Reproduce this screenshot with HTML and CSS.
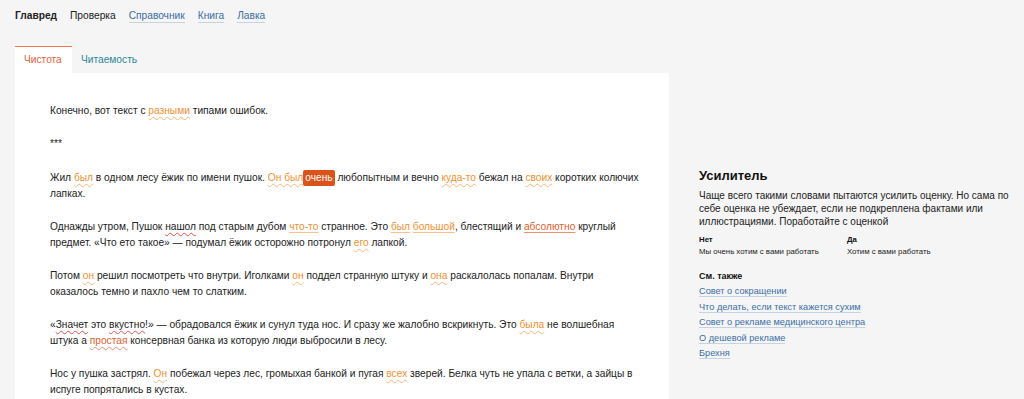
FILE: index.html
```html
<!DOCTYPE html>
<html lang="ru">
<head>
<meta charset="utf-8">
<title>Главред</title>
<link rel="stylesheet" href="styles.css">
</head>
<body>
<nav class="nav">
  <span class="nav-brand">Главред</span>
  <span class="nav-item">Проверка</span>
  <a class="nav-link">Справочник</a>
  <a class="nav-link">Книга</a>
  <a class="nav-link">Лавка</a>
</nav>
<div class="layout">
  <main class="editor">
    <div class="tabs">
      <div class="tab tab-active">Чистота</div>
      <div class="tab">Читаемость</div>
    </div>
    <div class="panel">
      <p class="para">Конечно, вот текст с <span class="hl w">разными</span> типами ошибок.</p>
      <p class="para stars">***</p>
      <p class="para">Жил <span class="hl w">был</span> в одном лесу ёжик по имени пушок. <span class="hl w">Он был</span><span class="sel">очень</span> любопытным и вечно <span class="hl w">куда-то</span> бежал на <span class="hl w">своих</span> коротких колючих лапках.</p>
      <p class="para">Однажды утром, Пушок <span class="sp">нашол</span> под старым дубом <span class="hl s">что-то</span> странное. Это <span class="hl s">был</span> <span class="hl s">большой</span>, блестящий и <span class="hr s">абсолютно</span> круглый предмет. «Что ето такое» — подумал ёжик осторожно потронул <span class="hl w">его</span> лапкой.</p>
      <p class="para">Потом <span class="hl w">он</span> решил посмотреть что внутри. Иголками <span class="hl w">он</span> поддел странную штуку и <span class="hl w">она</span> раскалолась попалам. Внутри<br>оказалось темно и пахло чем то слатким.</p>
      <p class="para">«<span class="sp">Значет</span> это <span class="sp">вкустно</span>!» — обрадовался ёжик и сунул туда нос. И сразу же жалобно вскрикнуть. Это <span class="hl w">была</span> не волшебная<br>штука а <span class="hr wr">простая</span> консервная банка из которую люди выбросили в лесу.</p>
      <p class="para">Нос у пушка застрял. <span class="hl w">Он</span> побежал через лес, громыхая банкой и пугая <span class="hl w">всех</span> зверей. Белка чуть не упала с ветки, а зайцы в испуге попрятались в кустах.</p>
    </div>
  </main>
  <aside class="side">
    <h2 class="side-title">Усилитель</h2>
    <p class="side-text">Чаще всего такими словами пытаются усилить оценку. Но сама по себе оценка не убеждает, если не подкреплена фактами или иллюстрациями. Поработайте с оценкой</p>
    <div class="examples">
      <div class="ex">
        <div class="ex-head">Нет</div>
        <div class="ex-body">Мы очень хотим с вами работать</div>
      </div>
      <div class="ex">
        <div class="ex-head">Да</div>
        <div class="ex-body">Хотим с вами работать</div>
      </div>
    </div>
    <div class="see-head">См. также</div>
    <ul class="see">
      <li><a class="see-link">Совет о сокращении</a></li>
      <li><a class="see-link">Что делать, если текст кажется сухим</a></li>
      <li><a class="see-link">Совет о рекламе медицинского центра</a></li>
      <li><a class="see-link">О дешевой рекламе</a></li>
      <li><a class="see-link">Брехня</a></li>
    </ul>
  </aside>
</div>
</body>
</html>
```
FILE: styles.css
```css
* { box-sizing: border-box; }
html, body { margin: 0; padding: 0; }
body {
  background: #f5f5f5;
  font-family: "Liberation Sans", Arial, sans-serif;
  color: #222;
  overflow: hidden;
  height: 399px;
}
.nav {
  display: flex;
  align-items: flex-start;
  gap: 13px;
  padding: 9px 15px 0 15px;
  font-size: 10.2px;
  line-height: 14px;
  height: 46px;
}
.nav-brand { font-weight: bold; color: #222; }
.nav-item { color: #222; }
.nav-link {
  color: #3b6ea5;
  border-bottom: 1px solid #c4d4e4;
  line-height: 13px;
  text-decoration: none;
}
.layout {
  display: flex;
  align-items: flex-start;
}
.editor {
  margin-left: 15px;
  width: 654px;
  flex: none;
}
.tabs {
  display: flex;
  height: 27px;
}
.tab {
  font-size: 10.2px;
  line-height: 26px;
  padding: 0 10px 0 9px;
  color: #2b8796;
  border-top: 1px solid transparent;
}
.tab-active {
  width: 57px;
  background: #fff;
  color: #e8603c;
  border-top: 1px solid #f07850;
}
.panel {
  background: #fff;
  border-radius: 0 3px 0 0;
  padding: 30px 24px 40px 35px;
  font-size: 10.2px;
  line-height: 16px;
  color: #222;
  min-height: 400px;
}
.para { margin: 0 0 17px 0; }
.stars { margin-bottom: 18px; }
.hl { color: #f39030; }
.hr { color: #e0602c; }
.w {
  text-decoration: underline wavy #f8b474;
  text-decoration-thickness: 1px;
  text-underline-offset: 2px;
}
.s {
  text-decoration: underline solid #f8c090;
  text-decoration-thickness: 1px;
  text-underline-offset: 2px;
}
.hr.s { text-decoration-color: #eb9070; }
.wr {
  text-decoration: underline wavy #ee8e70;
  text-decoration-thickness: 1px;
  text-underline-offset: 2px;
}
.sp {
  text-decoration: underline wavy #e65050;
  text-decoration-thickness: 1px;
  text-underline-offset: 2px;
}
.sel {
  background: #d9531a;
  color: #fff;
  border-radius: 2px;
  padding: 2px 2px 3px 2px;
}
.side {
  margin-left: 30px;
  margin-top: 122px;
  width: 318px;
  flex: none;
}
.side-title {
  font-size: 13px;
  line-height: 16px;
  margin: 0 0 5px 0;
  font-weight: bold;
  color: #111;
}
.side-text {
  font-size: 10px;
  line-height: 13px;
  margin: 0 0 6px 0;
  color: #222;
}
.examples {
  display: grid;
  grid-template-columns: 148px 1fr;
  font-size: 7.8px;
  line-height: 12px;
  margin-bottom: 12px;
}
.ex-head { font-weight: bold; color: #111; }
.ex-body { color: #222; }
.see-head {
  font-size: 9px;
  line-height: 13px;
  font-weight: bold;
  color: #111;
  margin-bottom: 2px;
}
.see {
  list-style: none;
  margin: 0;
  padding: 0;
  font-size: 9.2px;
  line-height: 13px;
}
.see li { margin-bottom: 2.5px; }
.see-link {
  color: #3b6ea5;
  border-bottom: 1px solid #c4d4e4;
}
```
